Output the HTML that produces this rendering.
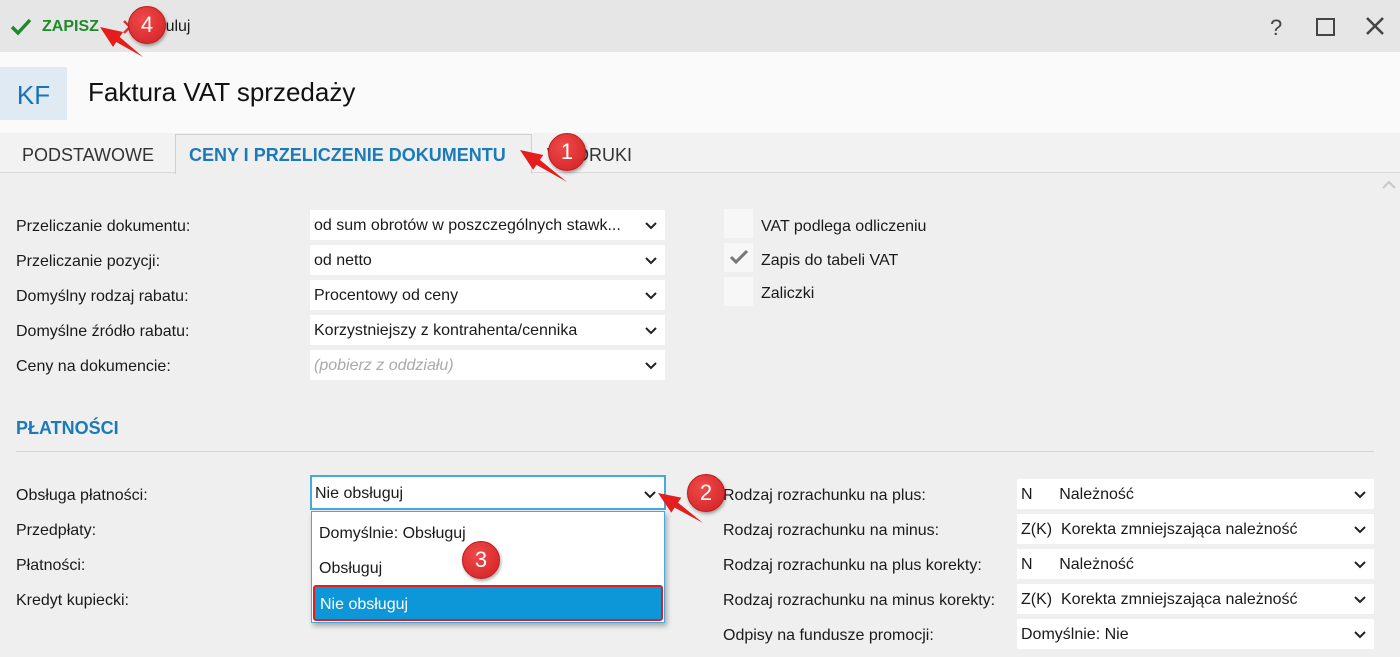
<!DOCTYPE html>
<html><head><meta charset="utf-8"><style>
*{margin:0;padding:0;box-sizing:border-box}
body{width:1400px;height:657px;overflow:hidden;background:#efefef;font-family:"Liberation Sans",sans-serif;color:#1a1a1a;position:relative}
.a{position:absolute;white-space:nowrap}
.lbl{font-size:16px;line-height:20px}
.sel{position:absolute;background:#fff;height:30px;font-size:16px;line-height:32px;padding-left:4px;white-space:nowrap;overflow:hidden}
.sel svg{position:absolute;right:8px;top:12px}
.cb{position:absolute;width:29px;height:29px;background:#f7f7f7}
.badge{position:absolute;width:38px;height:38px;border-radius:50%;background:radial-gradient(circle at 40% 35%,#ef4a4a,#d11f22);border:1px solid #c21a1c;color:#fff;font-size:22px;line-height:36px;text-align:center;box-shadow:1px 2px 3px rgba(0,0,0,.35)}
</style></head><body>
<div class="a" style="left:0;top:0;width:1400px;height:52px;background:#e6e6e6"></div>
<svg class="a" style="left:10px;top:18px" width="22" height="18"><path d="M2 9 L8 15 L20 2" stroke="#1e8a2a" stroke-width="3.5" fill="none"/></svg>
<div class="a" style="left:42px;top:18px;font-size:16px;font-weight:bold;color:#1e8a2a">ZAPISZ</div>
<svg class="a" style="left:122px;top:19px" width="16" height="16"><path d="M2 2L14 14M14 2L2 14" stroke="#d33" stroke-width="2.5"/></svg>
<div class="a" style="left:146px;top:18px;font-size:16px">Anuluj</div>
<div class="a" style="left:1270px;top:15px;font-size:22px;color:#444">?</div>
<div class="a" style="left:1316px;top:18px;width:19px;height:18px;border:2.5px solid #444"></div>
<svg class="a" style="left:1366px;top:17px" width="18" height="18"><path d="M1 1L17 17M17 1L1 17" stroke="#444" stroke-width="2.5"/></svg>
<div class="a" style="left:0;top:52px;width:1400px;height:81px;background:#fafafa"></div>
<div class="a" style="left:0;top:67px;width:67px;height:53px;background:#dfeaf3;color:#1b73b3;font-size:26px;line-height:56px;text-align:center">KF</div>
<div class="a" style="left:88px;top:77px;font-size:26px;color:#111">Faktura VAT sprzedaży</div>
<div class="a" style="left:0;top:133px;width:1400px;height:40px;background:#f2f2f2;border-bottom:1px solid #d8d8d8"></div>
<div class="a" style="left:22px;top:145px;font-size:18px;color:#333">PODSTAWOWE</div>
<div class="a" style="left:175px;top:134px;width:357px;height:40px;background:#efefef;border:1px solid #d0d0d0;border-bottom:none"></div>
<div class="a" style="left:189px;top:145px;font-size:18px;font-weight:bold;color:#1b7ab8">CENY I PRZELICZENIE DOKUMENTU</div>
<div class="a" style="left:547px;top:145px;font-size:18px;color:#333">WYDRUKI</div>
<svg class="a" style="left:1382px;top:180px" width="14" height="10"><path d="M1 8L7 2L13 8" stroke="#c8c8c8" stroke-width="2" fill="none"/></svg>

<div class="a lbl" style="left:16px;top:217px">Przeliczanie dokumentu:</div>
<div class="a lbl" style="left:16px;top:252px">Przeliczanie pozycji:</div>
<div class="a lbl" style="left:16px;top:287px">Domyślny rodzaj rabatu:</div>
<div class="a lbl" style="left:16px;top:322px">Domyślne źródło rabatu:</div>
<div class="a lbl" style="left:16px;top:357px">Ceny na dokumencie:</div>
<div class="sel" style="left:310px;top:210px;width:355px">od sum obrotów w poszczególnych stawk...<svg width="12" height="8"><path d="M1 1L6 6L11 1" stroke="#222" stroke-width="2" fill="none"/></svg></div>
<div class="sel" style="left:310px;top:245px;width:355px">od netto<svg width="12" height="8"><path d="M1 1L6 6L11 1" stroke="#222" stroke-width="2" fill="none"/></svg></div>
<div class="sel" style="left:310px;top:280px;width:355px">Procentowy od ceny<svg width="12" height="8"><path d="M1 1L6 6L11 1" stroke="#222" stroke-width="2" fill="none"/></svg></div>
<div class="sel" style="left:310px;top:315px;width:355px">Korzystniejszy z kontrahenta/cennika<svg width="12" height="8"><path d="M1 1L6 6L11 1" stroke="#222" stroke-width="2" fill="none"/></svg></div>
<div class="sel" style="left:310px;top:350px;width:355px;color:#aaa;font-style:italic">(pobierz z oddziału)<svg width="12" height="8"><path d="M1 1L6 6L11 1" stroke="#222" stroke-width="2" fill="none"/></svg></div>

<div class="cb" style="left:724px;top:209px"></div>
<div class="cb" style="left:724px;top:243px"></div>
<svg class="a" style="left:729px;top:249px" width="20" height="16"><path d="M2 8L7 13L18 2" stroke="#777" stroke-width="3" fill="none"/></svg>
<div class="cb" style="left:724px;top:277px"></div>
<div class="a lbl" style="left:761px;top:217px">VAT podlega odliczeniu</div>
<div class="a lbl" style="left:761px;top:251px">Zapis do tabeli VAT</div>
<div class="a lbl" style="left:761px;top:284px">Zaliczki</div>

<div class="a" style="left:16px;top:418px;font-size:18px;font-weight:bold;color:#1b7ab8">PŁATNOŚCI</div>
<div class="a" style="left:16px;top:451px;width:1358px;height:1px;background:#d4d4d4"></div>

<div class="a lbl" style="left:16px;top:486px">Obsługa płatności:</div>
<div class="a lbl" style="left:16px;top:521px">Przedpłaty:</div>
<div class="a lbl" style="left:16px;top:556px">Płatności:</div>
<div class="a lbl" style="left:16px;top:591px">Kredyt kupiecki:</div>
<div class="sel" style="left:310px;top:475px;width:356px;height:35px;border:2px solid #45a9e0;line-height:34px;padding-left:3px">Nie obsługuj<svg width="12" height="8" style="top:14px"><path d="M1 1L6 6L11 1" stroke="#222" stroke-width="2" fill="none"/></svg></div>
<div class="a" style="left:311px;top:511px;width:354px;height:112px;background:#fff;border:1px solid #45a9e0;box-shadow:2px 3px 5px rgba(0,0,0,.3)"></div>
<div class="a lbl" style="left:319px;top:524px">Domyślnie: Obsługuj</div>
<div class="a lbl" style="left:319px;top:559px">Obsługuj</div>
<div class="a" style="left:313px;top:585px;width:350px;height:36px;background:#0d97d8;border:2px solid #e02020;border-radius:3px;color:#fff;font-size:16px;line-height:36px;padding-left:5px">Nie obsługuj</div>

<div class="a lbl" style="left:723px;top:486px">Rodzaj rozrachunku na plus:</div>
<div class="a lbl" style="left:723px;top:521px">Rodzaj rozrachunku na minus:</div>
<div class="a lbl" style="left:723px;top:556px">Rodzaj rozrachunku na plus korekty:</div>
<div class="a lbl" style="left:723px;top:591px">Rodzaj rozrachunku na minus korekty:</div>
<div class="a lbl" style="left:723px;top:626px">Odpisy na fundusze promocji:</div>
<div class="sel" style="left:1017px;top:479px;width:357px">N&nbsp;&nbsp;&nbsp;&nbsp;&nbsp;&nbsp;Należność<svg width="12" height="8"><path d="M1 1L6 6L11 1" stroke="#222" stroke-width="2" fill="none"/></svg></div>
<div class="sel" style="left:1017px;top:514px;width:357px">Z(K)&nbsp;&nbsp;Korekta zmniejszająca należność<svg width="12" height="8"><path d="M1 1L6 6L11 1" stroke="#222" stroke-width="2" fill="none"/></svg></div>
<div class="sel" style="left:1017px;top:549px;width:357px">N&nbsp;&nbsp;&nbsp;&nbsp;&nbsp;&nbsp;Należność<svg width="12" height="8"><path d="M1 1L6 6L11 1" stroke="#222" stroke-width="2" fill="none"/></svg></div>
<div class="sel" style="left:1017px;top:584px;width:357px">Z(K)&nbsp;&nbsp;Korekta zmniejszająca należność<svg width="12" height="8"><path d="M1 1L6 6L11 1" stroke="#222" stroke-width="2" fill="none"/></svg></div>
<div class="sel" style="left:1017px;top:619px;width:357px">Domyślnie: Nie<svg width="12" height="8"><path d="M1 1L6 6L11 1" stroke="#222" stroke-width="2" fill="none"/></svg></div>

<svg class="a" style="left:0;top:0" width="1400" height="657">
<path d="M100 27 L123 32 L119.7 37 L143 57 L116.3 42 L113 47 Z" fill="#e61d1d"/>
<path d="M520 150 L543.3 155 L539.9 159.9 L567 182 L536.5 164.9 L533.1 169.8 Z" fill="#e61d1d"/>
<path d="M658 493 L681.3 497.6 L678 502.6 L703 523 L674.6 507.6 L671.3 512.6 Z" fill="#e61d1d"/>
</svg>
<div class="badge" style="left:128px;top:6px">4</div>
<div class="badge" style="left:548px;top:133px">1</div>
<div class="badge" style="left:687px;top:474px">2</div>
<div class="badge" style="left:462px;top:541px">3</div>
</body></html>
